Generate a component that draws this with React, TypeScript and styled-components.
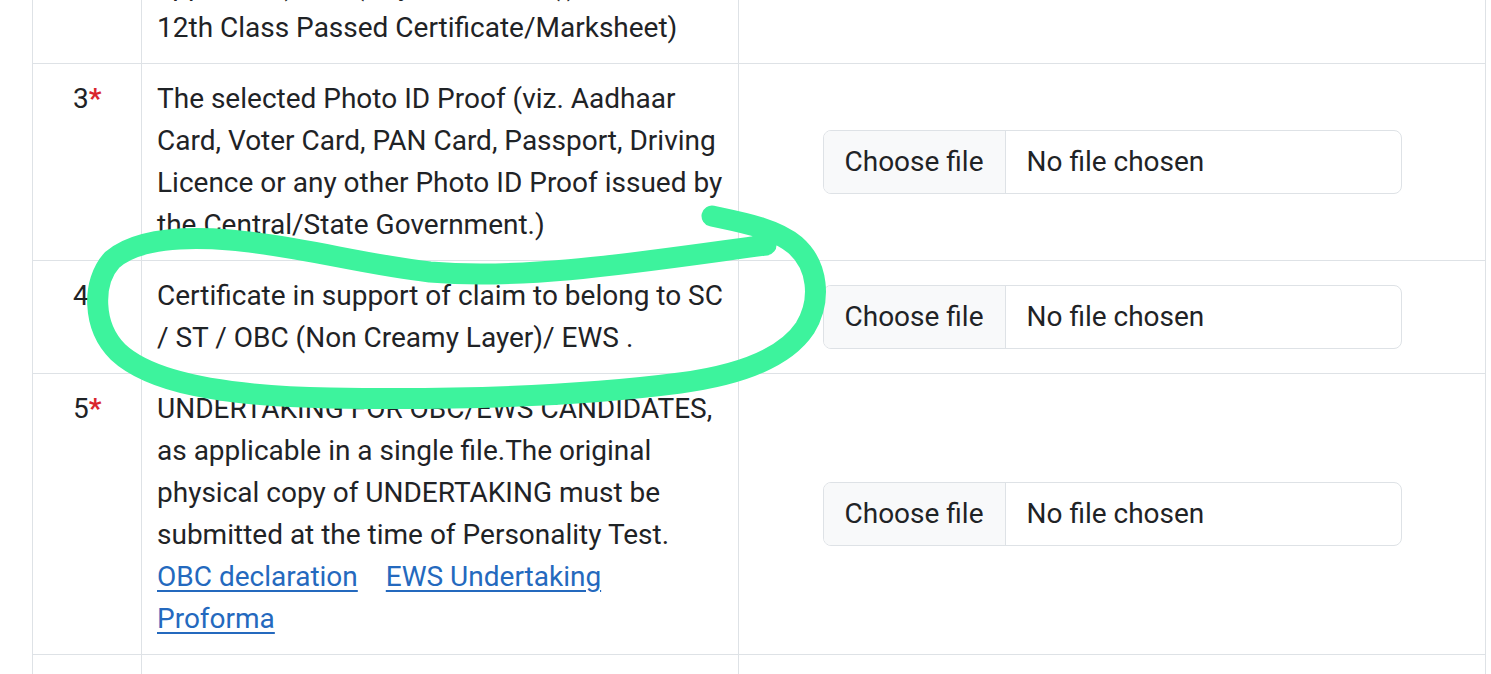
import React from 'react'
import styled, { createGlobalStyle } from 'styled-components'

const GlobalStyle = createGlobalStyle`
  html, body {
    margin: 0;
    padding: 0;
    background: #fff;
  }
  body {
    font-family: Roboto, "Liberation Sans", Arial, sans-serif;
    color: #1f2326;
    overflow: hidden;
  }
`

const Page = styled.div`
  position: relative;
  width: 1491px;
  height: 674px;
  overflow: hidden;
`

const Table = styled.table`
  margin: -50px 0 0 32px;
  width: 1453px;
  border-collapse: collapse;
  table-layout: fixed;
  font-size: 28px;
  line-height: 42px;
`

const Cell = styled.td<{ $middle?: boolean }>`
  border: 1px solid #dee2e6;
  padding: 14px 15px;
  vertical-align: ${p => (p.$middle ? 'middle' : 'top')};
`

const NumCell = styled(Cell)`
  padding-left: 40px;
`

const Star = styled.span`
  color: #d9262e;
  font-weight: 700;
`

const DocLink = styled.a<{ $gap?: boolean }>`
  color: #2469be;
  text-decoration: underline;
  text-underline-offset: 4px;
  margin-left: ${p => (p.$gap ? '28px' : '0')};
`

const FileBox = styled.label`
  box-sizing: border-box;
  display: flex;
  width: 579px;
  height: 64px;
  margin: 0 auto;
  border: 1px solid #dee2e6;
  border-radius: 8px;
  overflow: hidden;
  background: #fff;
`

const FileButton = styled.span`
  display: flex;
  align-items: center;
  padding: 0 21px;
  background: #f8f9fa;
  border-right: 1px solid #dee2e6;
`

const FileName = styled.span`
  display: flex;
  align-items: center;
  padding: 0 21px;
`

const Scribble = styled.svg`
  position: absolute;
  left: 0;
  top: 0;
  pointer-events: none;
`

const FileInput: React.FC = () => (
  <FileBox>
    <FileButton>Choose file</FileButton>
    <FileName>No file chosen</FileName>
  </FileBox>
)

type Row = { no: string; required?: boolean; text: React.ReactNode; upload?: boolean }

const rows: Row[] = [
  {
    no: '',
    text: (
      <>
        applicable) and (Any one of the (i) and
        <br />
        12th Class Passed Certificate/Marksheet)
      </>
    ),
  },
  {
    no: '3',
    required: true,
    upload: true,
    text: 'The selected Photo ID Proof (viz. Aadhaar Card, Voter Card, PAN Card, Passport, Driving Licence or any other Photo ID Proof issued by the Central/State Government.)',
  },
  {
    no: '4',
    upload: true,
    text: 'Certificate in support of claim to belong to SC / ST / OBC (Non Creamy Layer)/ EWS .',
  },
  {
    no: '5',
    required: true,
    upload: true,
    text: (
      <>
        UNDERTAKING FOR OBC/EWS CANDIDATES, as applicable in a single file.The original physical copy of
        UNDERTAKING must be submitted at the time of Personality Test.{' '}
        <DocLink href="#">OBC declaration</DocLink>
        <DocLink href="#" $gap>EWS Undertaking Proforma</DocLink>
      </>
    ),
  },
  {
    no: '6',
    upload: true,
    text: 'Certificate of Disability (in the prescribed format) issued by the competent authority, in case of Persons with Benchmark Disability.',
  },
]

export default function App() {
  return (
    <Page>
      <GlobalStyle />
      <Table>
        <colgroup>
          <col style={{ width: 109 }} />
          <col style={{ width: 597 }} />
          <col style={{ width: 747 }} />
        </colgroup>
        <tbody>
          {rows.map((r, i) => (
            <tr key={i}>
              <NumCell>
                {r.no}
                {r.required && <Star>*</Star>}
              </NumCell>
              <Cell>{r.text}</Cell>
              <Cell $middle>{r.upload && <FileInput />}</Cell>
            </tr>
          ))}
        </tbody>
      </Table>
      <Scribble width="1491" height="674" viewBox="0 0 1491 674">
        <path
          d="M 712 216
             C 740 222, 775 228, 795 245
             C 818 265, 822 300, 805 328
             C 785 358, 740 375, 680 383
             C 580 396, 450 400, 330 398
             C 220 396, 150 382, 118 352
             C 92 326, 92 282, 112 260
             C 135 240, 180 236, 230 240
             C 300 246, 360 264, 430 272
             C 530 280, 640 262, 766 245"
          fill="none"
          stroke="#3df39d"
          strokeWidth="21"
          strokeLinecap="round"
          strokeLinejoin="round"
        />
      </Scribble>
    </Page>
  )
}
